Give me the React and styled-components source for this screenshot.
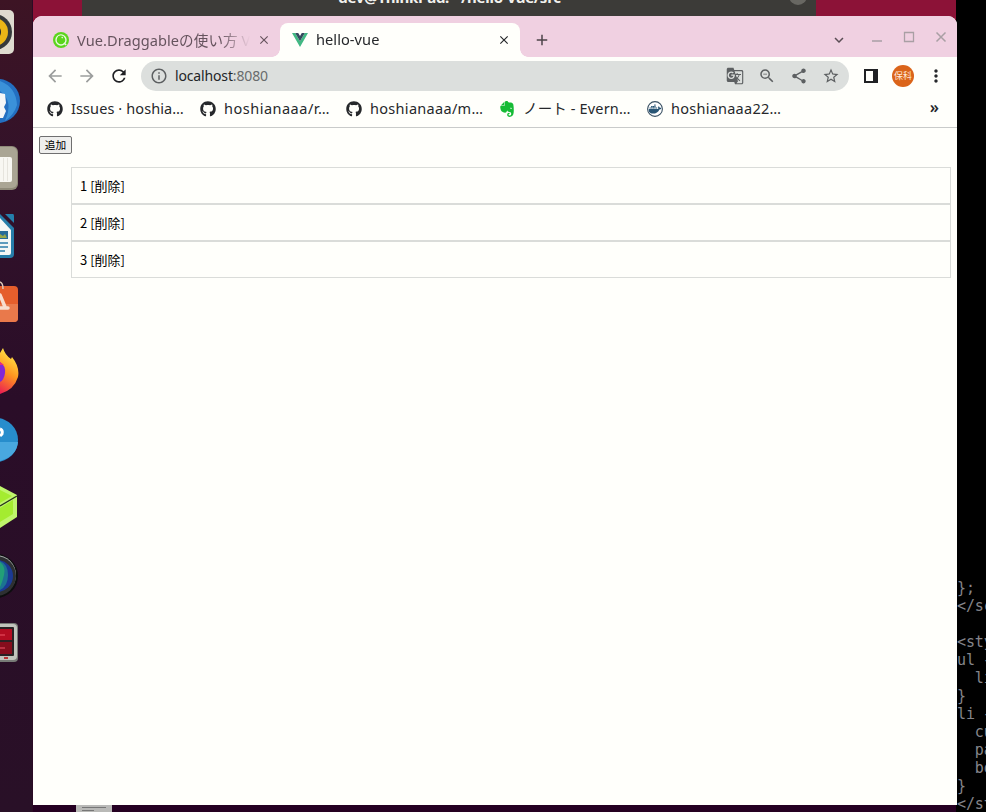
import React from "react"
import styled, { createGlobalStyle } from "styled-components"
import {
  MdAdd,
  MdArrowBack,
  MdArrowForward,
  MdClose,
  MdGTranslate,
  MdInfoOutline,
  MdKeyboardArrowDown,
  MdMoreVert,
  MdRefresh,
  MdShare,
  MdStarBorder,
  MdZoomOut,
} from "react-icons/md"
import { SiEvernote } from "react-icons/si"
import { FaDocker, FaGithub } from "react-icons/fa"

const GlobalStyle = createGlobalStyle`
  * {
    box-sizing: border-box;
  }
  body {
    margin: 0;
    overflow: hidden;
    background: #250022;
    font-family: "Noto Sans", "Noto Sans CJK JP", sans-serif;
  }
  svg {
    display: block;
    flex: none;
  }
`

const Desktop = styled.div`
  position: relative;
  width: 986px;
  height: 812px;
  overflow: hidden;
  background: linear-gradient(#8c1237 0, #8c1237 18px, #250024 60px, #250022);
`

const Dock = styled.nav`
  position: absolute;
  inset: 0 auto 0 0;
  width: 33px;
  padding-top: 10px;
  display: flex;
  flex-direction: column;
  gap: 24px;
  background: linear-gradient(#3d1424, #32122a 180px, #2a0d28 400px, #291027);
  border-right: 1px solid #2b0b25;
`

const TitleWindow = styled.div`
  position: absolute;
  top: -21px;
  left: 82px;
  width: 734px;
  height: 37px;
  display: flex;
  align-items: center;
  justify-content: flex-end;
  padding-right: 9px;
  background: #3c3b38;
`

const WindowTitle = styled.div`
  flex: 1;
  padding: 0 0 2px 28px;
  text-align: center;
  color: #f2f1ed;
  font-size: 15px;
  font-weight: 700;
  line-height: 20px;
  letter-spacing: -0.25px;
  white-space: nowrap;
`

const RoundButton = styled.div`
  width: 18px;
  height: 18px;
  margin-top: -4px;
  border-radius: 50%;
  background: #686762;
`

const Terminal = styled.pre`
  position: absolute;
  top: 0;
  left: 956px;
  width: 30px;
  height: 812px;
  margin: 0;
  padding: 579px 0 0 1px;
  overflow: hidden;
  background: #000;
  color: #85858a;
  font: 15px/18px "DejaVu Sans Mono", monospace;
  letter-spacing: -0.1px;
`

const DesktopFile = styled.div`
  position: absolute;
  top: 805px;
  left: 76px;
  width: 36px;
  height: 7px;
  padding: 2px 6px;
  display: flex;
  flex-direction: column;
  gap: 2px;
  background: #b9b9b7;
`

const FileLine = styled.div`
  width: ${props => props.width};
  height: 1px;
  background: #777;
`

const Browser = styled.div`
  position: absolute;
  top: 16px;
  left: 33px;
  width: 924px;
  height: 789px;
  display: flex;
  flex-direction: column;
  overflow: hidden;
  border-radius: 9px 9px 0 0;
  background: #fffffb;
  color: #26282b;
`

const TabStrip = styled.div`
  display: flex;
  height: 41px;
  padding-top: 7px;
  background: #f0d0e1;
`

const Tab = styled.div`
  position: relative;
  display: flex;
  align-items: center;
  width: ${props => (props.$active ? "240px" : "247px")};
  padding: 0 9px 0 ${props => (props.$active ? "12px" : "20px")};
  border-radius: 8px 8px 0 0;
  background: ${props => (props.$active ? "#fffffb" : "transparent")};
  color: ${props => (props.$active ? "#26282b" : "#66545e")};
  font-size: 14.6px;

  &::before,
  &::after {
    content: "";
    display: ${props => (props.$active ? "block" : "none")};
    position: absolute;
    bottom: 0;
    width: 8px;
    height: 8px;
  }
  &::before {
    left: -8px;
    background: radial-gradient(circle at 0 0, #f0d0e1 7.5px, #fffffb 8px);
  }
  &::after {
    right: -8px;
    background: radial-gradient(circle at 100% 0, #f0d0e1 7.5px, #fffffb 8px);
  }
`

const TabTitle = styled.span`
  flex: 1;
  margin: 0 3px 0 8px;
  padding-bottom: 2px;
  overflow: hidden;
  white-space: nowrap;
  letter-spacing: 0.05px;
  mask-image: linear-gradient(to left, transparent 4px, #000 34px);
`

const NewTab = styled.div`
  display: flex;
  align-items: center;
  padding-left: 13px;
  color: #4c4348;
`

const WindowControls = styled.div`
  display: flex;
  align-items: center;
  margin-left: auto;
  padding: 0 10px 1px 0;
  gap: 20px;
  color: #a99fa4;
`

const TabSearch = styled.div`
  margin: 0 3px 0 0;
  padding-top: 1px;
  color: #5b4d55;
`

const Toolbar = styled.div`
  display: flex;
  align-items: center;
  height: 38px;
  padding: 0 10px 0 12px;
`

const NavButtons = styled.div`
  display: flex;
  flex: none;
  gap: 12px;
  width: 96px;
  color: #9c9e9d;
`

const AddressBar = styled.div`
  display: flex;
  flex: none;
  align-items: center;
  width: 708px;
  height: 30px;
  padding: 0 9px;
  border-radius: 15px;
  background: #dcdfdd;
  color: #5d6062;
`

const Address = styled.span`
  flex: 1;
  margin-left: 7px;
  padding-bottom: 1px;
  font-size: 14px;
  letter-spacing: -0.15px;
  color: #686b6c;
`

const Host = styled.span`
  color: #232527;
`

const AddressActions = styled.div`
  display: flex;
  gap: 14px;
`

const ToolbarEnd = styled.div`
  display: flex;
  align-items: center;
  margin-left: 15px;
`

const Avatar = styled.div`
  width: 22px;
  height: 22px;
  margin: 0 12px 0 14px;
  border-radius: 50%;
  background: #db641a;
  color: #ffeadb;
  font-size: 9px;
  line-height: 22px;
  text-align: center;
`

const Bookmarks = styled.div`
  display: flex;
  align-items: center;
  height: 33px;
  padding: 0 18px 5px 14px;
  border-bottom: 1px solid #c9cbca;
`

const Bookmark = styled.div`
  display: flex;
  align-items: center;
  gap: 8px;
  width: ${props => props.$width}px;
  font-size: 14.5px;
  letter-spacing: ${props => props.$spacing}px;
  white-space: nowrap;
`

const BookmarkTitle = styled.span`
  padding-bottom: 2px;
`

const More = styled.div`
  margin-left: auto;
  padding-bottom: 3px;
  font-size: 16px;
  font-weight: 600;
  line-height: 20px;
`

const Page = styled.main`
  padding: 8px 6px;
  color: #000;
  font-family: "Noto Sans CJK JP", sans-serif;
`

const AddButton = styled.button`
  display: block;
  width: 33px;
  height: 18px;
  padding: 0;
  border: 1px solid #6f6f6f;
  border-radius: 2px;
  background: #efefed;
  color: #000;
  font: 10.7px/14px "Noto Sans CJK JP", sans-serif;
`

const List = styled.ul`
  margin: 13px 0 0;
  padding: 0 0 0 32px;
  list-style: none;
`

const Item = styled.li`
  height: 37px;
  padding: 0 8px;
  border: 1px solid #dadcd9;
  font-size: 13px;
  line-height: 36px;
`

const dockIcons = [
  <>
    <rect x="-30" width="44" height="44" rx="5" fill="#dedbd0" />
    <circle cx="-6" cy="22" r="18" fill="#353a3b" />
    <circle cx="-6" cy="22" r="14" fill="#eab616" />
    <circle cx="-6" cy="22" r="7" fill="#24272a" />
  </>,
  <>
    <circle cx="-2" cy="23" r="22" fill="#236fc1" />
    <path d="M0 3Q16 9 17 27Q14 37 5 43Q14 23 0 13" fill="#3b91d9" />
    <path d="M0 15l5 1 1 9-2 4 2 4-3 7H0z" fill="#f5f6f7" />
  </>,
  <>
    <rect x="-26" width="44" height="44" rx="6" fill="#8e8978" />
    <rect x="-26" y="1" width="43" height="41" rx="5" fill="#aaa594" />
    <rect x="-18" y="11" width="30" height="25" rx="2" fill="#f8f7f2" />
    <path d="M3.5 12v23M7.5 12v23" stroke="#e6e4dd" fill="none" />
  </>,
  <>
    <path d="M5 0h8q1 0 1 2v7z" fill="#247fac" />
    <path d="M0 0l14 14v26q0 4-4 4H0z" fill="#267da9" />
    <path d="M0 4l11 12v23q0 2-2 2H0z" fill="#f4f6f5" />
    <path d="M0 17h8v8H0z" fill="#286b98" />
    <path d="M0 24V20l3 2 2-2 2 4z" fill="#98a74b" />
    <path d="M0 29h8M0 33h8M0 37h5" stroke="#2c7eaa" strokeWidth="1.6" />
  </>,
  <>
    <rect x="-26" y="4" width="44" height="36" rx="4" fill="#e55e2c" />
    <path d="M0 22h18v14q0 4-4 4H0z" fill="#e9794b" />
    <path d="M0 0q3 1 3 7" stroke="#dfc9b9" strokeWidth="1.5" fill="none" />
    <path d="M0 13l5 12M0 26h8" stroke="#f7ded0" strokeWidth="3.5" strokeLinecap="round" />
  </>,
  <>
    <defs>
      <linearGradient id="firefox" x1="0.7" x2="0.3" y1="0" y2="1">
        <stop offset="0" stopColor="#fff04b" />
        <stop offset="0.5" stopColor="#ff941f" />
        <stop offset="1" stopColor="#ea1855" />
      </linearGradient>
    </defs>
    <path d="M-8 4L0 3l3-5q2 7 8 11l1-2q8 10 6 20Q14 40 0 44H-8z" fill="url(#firefox)" />
    <path d="M0 12q6 4 5 11T0 32z" fill="#8327d5" />
    <path d="M0 12l4 3H0" fill="#e72d79" />
  </>,
  <>
    <circle cx="-4" cy="22" r="22" fill="#278dcc" />
    <path d="M0 24h18q-1 14-18 19z" fill="#49a8df" />
    <path d="M0 11q3 1 2 5l-2 2" stroke="#fff" strokeWidth="3" fill="none" />
  </>,
  <>
    <path d="M0 0l17 9v22L0 42z" fill="#bff56c" />
    <path d="M0 4l12 6L0 17z" fill="#a4ec30" />
    <path d="M0 22l13-8v14L0 36z" fill="#a4ec30" />
    <path d="M0 20L17 10" stroke="#26331d" strokeWidth="1.4" />
  </>,
  <>
    <circle cx="-4" cy="22" r="22" fill="#0d0e0f" />
    <circle cx="-4" cy="21" r="20" fill="#a7aaab" />
    <circle cx="-4" cy="22" r="20" fill="#2e3032" />
    <circle cx="-3" cy="22" r="16" fill="#1b3a94" />
    <path d="M0 7q8 3 8 14T0 36z" fill="#1c7391" />
    <path d="M0 8q6 5 4 13T0 33z" fill="#22a077" />
  </>,
  <>
    <rect x="-26" y="1" width="44" height="39" rx="4" fill="#777a76" />
    <rect x="-26" y="2" width="43" height="36" rx="4" fill="#c1c4bc" />
    <rect x="-20" y="5" width="34" height="29" rx="1" fill="#292224" />
    <path d="M0 7h12v11H0z" fill="#b30c21" />
    <path d="M0 20h12v12H0z" fill="#850d1c" />
    <path d="M0 13h5M0 26h5" stroke="#ee5466" />
    <path d="M4 36h4" stroke="#b93636" strokeWidth="2" />
  </>,
]

const VueLogo = () => (
  <svg width="16" height="14" viewBox="0 0 16 14">
    <path d="M0 0h3.2L8 8.3 12.8 0H16L8 14z" fill="#41b883" />
    <path d="M3.2 0h3L8 3.1 9.8 0h3L8 8.3z" fill="#35495e" />
  </svg>
)

const QiitaLogo = () => (
  <svg width="16" height="16" viewBox="0 0 16 16">
    <circle cx="8" cy="8" r="8" fill="#5bd51d" />
    <circle cx="8" cy="8" r="5" fill="none" stroke="#e9fadd" strokeWidth="1.4" />
    <circle cx="7.8" cy="6.9" r="3.4" fill="#5bd51d" />
    <circle cx="9.2" cy="5.6" r="0.8" fill="#e9fadd" />
    <path d="M11 11l2.2 2" stroke="#e9fadd" strokeWidth="1.4" />
  </svg>
)

const DockerLogo = () => (
  <svg width="16" height="16" viewBox="0 0 16 16">
    <circle cx="8" cy="8" r="7.4" fill="#fff" stroke="#3b5264" strokeWidth="1.1" />
    <FaDocker x="1.5" y="1.5" size={13} color="#285574" />
  </svg>
)

const SidePanelIcon = () => (
  <svg width="14" height="14" viewBox="0 0 14 14">
    <path d="M0 0h14v14H0zM2 2v10h7V2z" fill="#202124" fillRule="evenodd" />
  </svg>
)

const bookmarks = [
  { title: "Issues · hoshia…", width: 153, spacing: 0.1, icon: <FaGithub size={16} /> },
  { title: "hoshianaaa/r…", width: 146, spacing: 0.5, icon: <FaGithub size={16} /> },
  { title: "hoshianaaa/m…", width: 153, spacing: 0.3, icon: <FaGithub size={16} /> },
  { title: "ノート - Evern…", width: 148, spacing: 0.15, icon: <SiEvernote size={16} color="#16bb36" /> },
  { title: "hoshianaaa22…", width: 150, spacing: 0.25, icon: <DockerLogo /> },
]

const code = `};
</script>

<style>
ul {
  list-style-type: none;
}
li {
  cursor: pointer;
  padding: 10px;
  border: solid #ddd 1px;
}
</style>`

const Tabs = () => (
  <TabStrip>
    <Tab>
      <QiitaLogo />
      <TabTitle>Vue.Draggableの使い方 V</TabTitle>
      <MdClose size={14} stroke="currentColor" />
    </Tab>
    <Tab $active>
      <VueLogo />
      <TabTitle>hello-vue</TabTitle>
      <MdClose size={14} stroke="currentColor" />
    </Tab>
    <NewTab>
      <MdAdd size={18} />
    </NewTab>
    <WindowControls>
      <TabSearch>
        <MdKeyboardArrowDown size={18} />
      </TabSearch>
      <svg width="12" height="18" viewBox="0 0 12 18">
        <path d="M1 10h10" stroke="currentColor" strokeWidth="1.5" />
      </svg>
      <svg width="12" height="18" viewBox="0 0 12 18">
        <path d="M1.5 1.5h9v9h-9z" fill="none" stroke="currentColor" strokeWidth="1.3" />
      </svg>
      <svg width="12" height="18" viewBox="0 0 12 18">
        <path d="M1.5 1.5l9 9m0-9l-9 9" stroke="currentColor" strokeWidth="1.5" />
      </svg>
    </WindowControls>
  </TabStrip>
)

const App = () => {
  return (
    <>
      <GlobalStyle />
      <Desktop>
        <TitleWindow>
          <WindowTitle>dev@ThinkPad: ~/hello-vue/src</WindowTitle>
          <RoundButton />
        </TitleWindow>
        <Dock>
          {dockIcons.map((icon, i) => (
            <svg key={i} width="32" height="44" overflow="visible">
              {icon}
            </svg>
          ))}
        </Dock>
        <DesktopFile>
          <FileLine width="24px" />
          <FileLine width="12px" />
        </DesktopFile>
        <Terminal>{code}</Terminal>
        <Browser>
          <Tabs />
          <Toolbar>
            <NavButtons>
              <MdArrowBack size={20} />
              <MdArrowForward size={20} />
              <MdRefresh size={20} color="#202124" />
            </NavButtons>
            <AddressBar>
              <MdInfoOutline size={18} />
              <Address>
                <Host>localhost</Host>:8080
              </Address>
              <AddressActions>
                <MdGTranslate size={18} />
                <MdZoomOut size={18} />
                <MdShare size={18} />
                <MdStarBorder size={18} />
              </AddressActions>
            </AddressBar>
            <ToolbarEnd>
              <SidePanelIcon />
              <Avatar>保科</Avatar>
              <MdMoreVert size={20} />
            </ToolbarEnd>
          </Toolbar>
          <Bookmarks>
            {bookmarks.map(({ title, width, spacing, icon }) => (
              <Bookmark key={title} $width={width} $spacing={spacing}>
                {icon}
                <BookmarkTitle>{title}</BookmarkTitle>
              </Bookmark>
            ))}
            <More>»</More>
          </Bookmarks>
          <Page>
            <AddButton>追加</AddButton>
            <List>
              {[1, 2, 3].map(id => (
                <Item key={id}>{id} [削除]</Item>
              ))}
            </List>
          </Page>
        </Browser>
      </Desktop>
    </>
  )
}

export default App
